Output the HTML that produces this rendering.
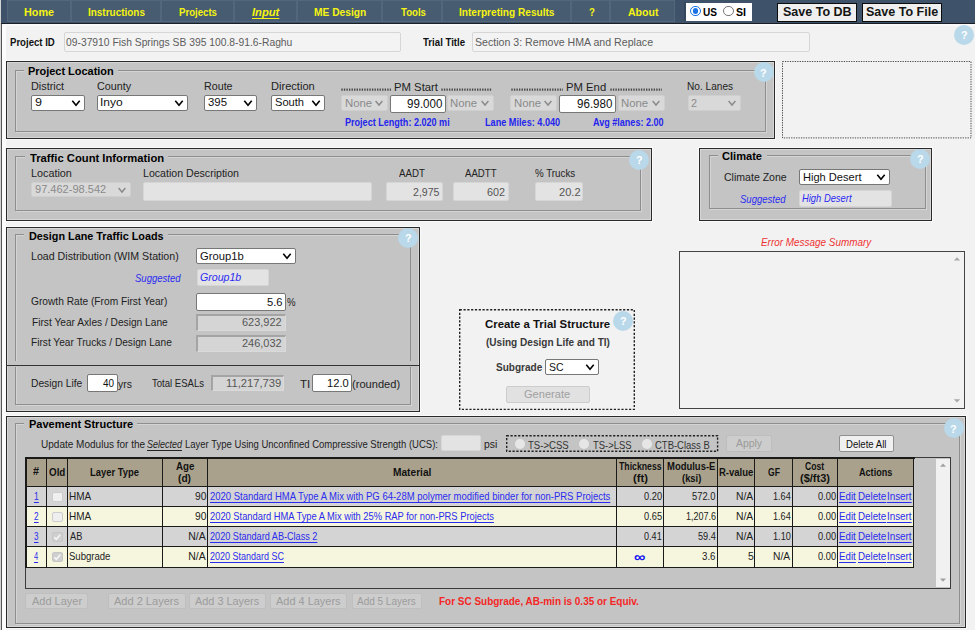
<!DOCTYPE html>
<html><head><meta charset="utf-8"><style>
html,body{margin:0;padding:0;background:#f2f2f2;}
body{width:975px;height:630px;overflow:hidden;position:relative;background:#f2f2f2;font-family:"Liberation Sans",sans-serif;}
body>div,body>span{position:absolute;}
span{white-space:nowrap;transform-origin:0 0;}
</style></head><body>
<div style="left:0px;top:0px;width:975px;height:23px;background:#3e5369;"></div>
<div style="left:0px;top:22.7px;width:975px;height:1.3px;background:#1a1f26;"></div>
<div style="left:7px;top:0px;width:64px;height:22px;background:#485c71;border:1px solid #52667c;box-sizing:border-box;"></div>
<div style="left:71px;top:0px;width:90px;height:22px;background:#485c71;border:1px solid #52667c;box-sizing:border-box;"></div>
<div style="left:161px;top:0px;width:73px;height:22px;background:#485c71;border:1px solid #52667c;box-sizing:border-box;"></div>
<div style="left:234px;top:0px;width:63px;height:22px;background:#485c71;border:1px solid #52667c;box-sizing:border-box;"></div>
<div style="left:297px;top:0px;width:85px;height:22px;background:#485c71;border:1px solid #52667c;box-sizing:border-box;"></div>
<div style="left:382px;top:0px;width:60px;height:22px;background:#485c71;border:1px solid #52667c;box-sizing:border-box;"></div>
<div style="left:442px;top:0px;width:129px;height:22px;background:#485c71;border:1px solid #52667c;box-sizing:border-box;"></div>
<div style="left:571px;top:0px;width:39px;height:22px;background:#485c71;border:1px solid #52667c;box-sizing:border-box;"></div>
<div style="left:610px;top:0px;width:65px;height:22px;background:#485c71;border:1px solid #52667c;box-sizing:border-box;"></div>
<div style="left:684px;top:2px;width:2px;height:19px;background:#34485d;"></div>
<span style="left:24.35px;top:7.19px;font-size:11px;line-height:11px;font-weight:bold;font-style:normal;color:#f5f510;transform:scaleX(0.9837);">Home</span>
<span style="left:88.40px;top:7.19px;font-size:11px;line-height:11px;font-weight:bold;font-style:normal;color:#f5f510;transform:scaleX(0.9042);">Instructions</span>
<span style="left:179.42px;top:7.19px;font-size:11px;line-height:11px;font-weight:bold;font-style:normal;color:#f5f510;transform:scaleX(0.8737);">Projects</span>
<span style="left:314.39px;top:7.19px;font-size:11px;line-height:11px;font-weight:bold;font-style:normal;color:#f5f510;transform:scaleX(0.9291);">ME Design</span>
<span style="left:400.90px;top:7.19px;font-size:11px;line-height:11px;font-weight:bold;font-style:normal;color:#f5f510;transform:scaleX(0.8734);">Tools</span>
<span style="left:459.39px;top:7.19px;font-size:11px;line-height:11px;font-weight:bold;font-style:normal;color:#f5f510;transform:scaleX(0.9188);">Interpreting Results</span>
<span style="left:588.62px;top:7.19px;font-size:11px;line-height:11px;font-weight:bold;font-style:normal;color:#f5f510;transform:scaleX(0.8741);">?</span>
<span style="left:627.79px;top:7.19px;font-size:11px;line-height:11px;font-weight:bold;font-style:normal;color:#f5f510;transform:scaleX(0.9569);">About</span>
<span style="left:252.28px;top:7.19px;font-size:11px;line-height:11px;font-weight:bold;font-style:italic;color:#f5f510;transform:scaleX(1.0163);text-decoration:underline;text-underline-offset:1.5px;">Input</span>
<div style="left:686px;top:3px;width:66px;height:18px;background:#fff;"></div>
<div style="left:690.3px;top:5.8px;width:10.6px;height:10.6px;border:1.6px solid #1a73e8;border-radius:50%;box-sizing:border-box;"></div>
<div style="left:692.7px;top:8.2px;width:5.8px;height:5.8px;background:#1a73e8;border-radius:50%;"></div>
<span style="left:703.40px;top:6.99px;font-size:11px;line-height:11px;font-weight:bold;font-style:normal;color:#000;transform:scaleX(0.9161);">US</span>
<div style="left:723.2px;top:5.8px;width:10.6px;height:10.6px;border:1px solid #777;border-radius:50%;box-sizing:border-box;"></div>
<span style="left:735.68px;top:6.99px;font-size:11px;line-height:11px;font-weight:bold;font-style:normal;color:#000;transform:scaleX(0.9626);">SI</span>
<div style="left:777px;top:3.3px;width:79.5px;height:19.2px;background:#efefef;border:1.7px solid #0c0c0c;box-sizing:border-box;"></div>
<span style="left:782.92px;top:6.44px;font-size:12px;line-height:12px;font-weight:bold;font-style:normal;color:#151515;transform:scaleX(1.0428);">Save To DB</span>
<div style="left:862px;top:3.3px;width:79.5px;height:19.2px;background:#efefef;border:1.7px solid #0c0c0c;box-sizing:border-box;"></div>
<span style="left:866.32px;top:6.44px;font-size:12px;line-height:12px;font-weight:bold;font-style:normal;color:#151515;transform:scaleX(1.0442);">Save To File</span>
<div style="left:0px;top:0px;width:1px;height:630px;background:#d4d4d4;"></div>
<div style="left:2px;top:24px;width:3.5px;height:606px;background:#fcfcfc;"></div>
<div style="left:2px;top:24px;width:973px;height:2px;background:#f9f9f9;"></div>
<div style="left:1px;top:24px;width:1px;height:606px;background:#555;"></div>
<span style="left:9.62px;top:37.11px;font-size:10.5px;line-height:10.5px;font-weight:bold;font-style:normal;color:#111;transform:scaleX(0.9128);">Project ID</span>
<div style="left:64px;top:32px;width:337px;height:20px;background:#f3f3f3;border:1px solid #d6d6d6;border-radius:2px;box-sizing:border-box;"></div>
<span style="left:66.09px;top:36.89px;font-size:11px;line-height:11px;font-weight:normal;font-style:normal;color:#5c5c5c;transform:scaleX(0.9370);">09-37910 Fish Springs SB 395 100.8-91.6-Raghu</span>
<span style="left:422.90px;top:37.11px;font-size:10.5px;line-height:10.5px;font-weight:bold;font-style:normal;color:#111;transform:scaleX(0.9172);">Trial Title</span>
<div style="left:472px;top:32px;width:338px;height:20px;background:#f3f3f3;border:1px solid #d6d6d6;border-radius:2px;box-sizing:border-box;"></div>
<span style="left:475.47px;top:36.89px;font-size:11px;line-height:11px;font-weight:normal;font-style:normal;color:#5c5c5c;transform:scaleX(0.9641);">Section 3: Remove HMA and Replace</span>
<div style="left:954.1px;top:24.700000000000003px;width:20px;height:20px;background:#b9d8e9;border-radius:50%;"></div>
<span style="left:960.87px;top:29.99px;font-size:11px;line-height:11px;font-weight:bold;font-style:normal;color:#fff;transform:scaleX(0.9790);">?</span>
<div style="left:6px;top:61px;width:767px;height:76px;background:#c4c4c4;border:1px solid #2a2a2a;box-shadow:0 0 0 1px #fbfbfb, inset 0 0 0 1px #d6d6d6;"></div>
<div style="left:15px;top:70px;width:750.5px;height:62px;border:1px solid #8e8e8e;box-shadow:inset 1px 1px 0 #d4d4d4, 1px 1px 0 #d4d4d4;box-sizing:border-box;"></div>
<div style="left:23.7px;top:67px;width:94.3px;height:6px;background:#c4c4c4;"></div>
<span style="left:28.04px;top:65.87px;font-size:11.5px;line-height:11.5px;font-weight:bold;font-style:normal;color:#000;transform:scaleX(0.9508);">Project Location</span>
<div style="left:753.6px;top:62.3px;width:20px;height:20px;background:#b9d8e9;border-radius:50%;"></div>
<span style="left:760.37px;top:67.59px;font-size:11px;line-height:11px;font-weight:bold;font-style:normal;color:#fff;transform:scaleX(0.9790);">?</span>
<span style="left:30.93px;top:80.81px;font-size:10.5px;line-height:10.5px;font-weight:normal;font-style:normal;color:#222;transform:scaleX(1.0325);">District</span>
<span style="left:96.86px;top:80.81px;font-size:10.5px;line-height:10.5px;font-weight:normal;font-style:normal;color:#222;transform:scaleX(1.0256);">County</span>
<span style="left:203.94px;top:80.81px;font-size:10.5px;line-height:10.5px;font-weight:normal;font-style:normal;color:#222;transform:scaleX(1.0199);">Route</span>
<span style="left:270.51px;top:80.81px;font-size:10.5px;line-height:10.5px;font-weight:normal;font-style:normal;color:#222;transform:scaleX(1.0551);">Direction</span>
<div style="left:31px;top:95px;width:54px;height:16px;background:#fff;border:1px solid #777;border-radius:2px;box-sizing:border-box;"></div>
<span style="left:35.00px;top:96.71px;font-size:10.5px;line-height:10.5px;font-weight:normal;font-style:normal;color:#111;transform:scaleX(1.1955);">9</span>
<svg style="position:absolute;left:69.8px;top:96.95px" width="12" height="12"><polyline points="2.3,3.8 6,8.2 9.7,3.8" fill="none" stroke="#000" stroke-width="1.6"/></svg>
<div style="left:97px;top:95px;width:91px;height:16px;background:#fff;border:1px solid #777;border-radius:2px;box-sizing:border-box;"></div>
<span style="left:100.32px;top:96.71px;font-size:10.5px;line-height:10.5px;font-weight:normal;font-style:normal;color:#111;transform:scaleX(1.1418);">Inyo</span>
<svg style="position:absolute;left:173.39999999999998px;top:96.95px" width="12" height="12"><polyline points="2.3,3.8 6,8.2 9.7,3.8" fill="none" stroke="#000" stroke-width="1.6"/></svg>
<div style="left:204px;top:95px;width:53px;height:16px;background:#fff;border:1px solid #777;border-radius:2px;box-sizing:border-box;"></div>
<span style="left:208.34px;top:96.71px;font-size:10.5px;line-height:10.5px;font-weight:normal;font-style:normal;color:#111;transform:scaleX(1.0842);">395</span>
<svg style="position:absolute;left:242.39999999999998px;top:96.95px" width="12" height="12"><polyline points="2.3,3.8 6,8.2 9.7,3.8" fill="none" stroke="#000" stroke-width="1.6"/></svg>
<div style="left:271px;top:95px;width:54px;height:16px;background:#fff;border:1px solid #777;border-radius:2px;box-sizing:border-box;"></div>
<span style="left:274.84px;top:96.71px;font-size:10.5px;line-height:10.5px;font-weight:normal;font-style:normal;color:#111;transform:scaleX(1.0590);">South</span>
<svg style="position:absolute;left:310.09999999999997px;top:96.95px" width="12" height="12"><polyline points="2.3,3.8 6,8.2 9.7,3.8" fill="none" stroke="#000" stroke-width="1.6"/></svg>
<svg style="position:absolute;left:341px;top:87px" width="50" height="6"><line x1="0.3" y1="2.7" x2="50" y2="2.7" stroke="#4a4a4a" stroke-width="2.2" stroke-dasharray="1.4,1.15"/></svg>
<svg style="position:absolute;left:441px;top:87px" width="51" height="6"><line x1="0.3" y1="2.7" x2="51" y2="2.7" stroke="#4a4a4a" stroke-width="2.2" stroke-dasharray="1.4,1.15"/></svg>
<svg style="position:absolute;left:510.5px;top:87px" width="52.0" height="6"><line x1="0.3" y1="2.7" x2="52.0" y2="2.7" stroke="#4a4a4a" stroke-width="2.2" stroke-dasharray="1.4,1.15"/></svg>
<svg style="position:absolute;left:609.5px;top:87px" width="52.5" height="6"><line x1="0.3" y1="2.7" x2="52.5" y2="2.7" stroke="#4a4a4a" stroke-width="2.2" stroke-dasharray="1.4,1.15"/></svg>
<span style="left:394.09px;top:81.61px;font-size:10.5px;line-height:10.5px;font-weight:normal;font-style:normal;color:#222;transform:scaleX(1.0777);">PM Start</span>
<span style="left:566.10px;top:81.61px;font-size:10.5px;line-height:10.5px;font-weight:normal;font-style:normal;color:#222;transform:scaleX(1.0753);">PM End</span>
<div style="left:341px;top:95px;width:47px;height:16px;background:#d9d9d9;border:1px solid #cfcfcf;border-radius:2px;box-sizing:border-box;"></div>
<span style="left:344.69px;top:97.51px;font-size:10.5px;line-height:10.5px;font-weight:normal;font-style:normal;color:#8a8a8a;transform:scaleX(1.0830);">None</span>
<svg style="position:absolute;left:372.5px;top:97.1px" width="12" height="12"><polyline points="2.6,3.96 6,8.04 9.4,3.96" fill="none" stroke="#8a8a8a" stroke-width="1.4"/></svg>
<div style="left:390px;top:95px;width:56px;height:18px;background:#fff;border:1px solid #777;border-radius:2px;box-sizing:border-box;"></div>
<span style="left:406.54px;top:97.64px;font-size:12px;line-height:12px;font-weight:normal;font-style:normal;color:#111;transform:scaleX(0.9648);">99.000</span>
<div style="left:447px;top:95px;width:47px;height:16px;background:#d9d9d9;border:1px solid #cfcfcf;border-radius:2px;box-sizing:border-box;"></div>
<span style="left:450.09px;top:97.51px;font-size:10.5px;line-height:10.5px;font-weight:normal;font-style:normal;color:#8a8a8a;transform:scaleX(1.0830);">None</span>
<svg style="position:absolute;left:478.5px;top:97.1px" width="12" height="12"><polyline points="2.6,3.96 6,8.04 9.4,3.96" fill="none" stroke="#8a8a8a" stroke-width="1.4"/></svg>
<div style="left:510px;top:95px;width:47px;height:16px;background:#d9d9d9;border:1px solid #cfcfcf;border-radius:2px;box-sizing:border-box;"></div>
<span style="left:513.89px;top:97.51px;font-size:10.5px;line-height:10.5px;font-weight:normal;font-style:normal;color:#8a8a8a;transform:scaleX(1.0830);">None</span>
<svg style="position:absolute;left:541.5px;top:97.1px" width="12" height="12"><polyline points="2.6,3.96 6,8.04 9.4,3.96" fill="none" stroke="#8a8a8a" stroke-width="1.4"/></svg>
<div style="left:559px;top:95px;width:57px;height:18px;background:#fff;border:1px solid #777;border-radius:2px;box-sizing:border-box;"></div>
<span style="left:576.54px;top:97.64px;font-size:12px;line-height:12px;font-weight:normal;font-style:normal;color:#111;transform:scaleX(0.9648);">96.980</span>
<div style="left:618px;top:95px;width:47px;height:16px;background:#d9d9d9;border:1px solid #cfcfcf;border-radius:2px;box-sizing:border-box;"></div>
<span style="left:621.09px;top:97.51px;font-size:10.5px;line-height:10.5px;font-weight:normal;font-style:normal;color:#8a8a8a;transform:scaleX(1.0830);">None</span>
<svg style="position:absolute;left:649.5px;top:97.1px" width="12" height="12"><polyline points="2.6,3.96 6,8.04 9.4,3.96" fill="none" stroke="#8a8a8a" stroke-width="1.4"/></svg>
<span style="left:687.19px;top:80.81px;font-size:10.5px;line-height:10.5px;font-weight:normal;font-style:normal;color:#222;transform:scaleX(0.9631);">No. Lanes</span>
<div style="left:688px;top:95px;width:53px;height:16px;background:#d9d9d9;border:1px solid #cfcfcf;border-radius:2px;box-sizing:border-box;"></div>
<span style="left:691.46px;top:97.51px;font-size:10.5px;line-height:10.5px;font-weight:normal;font-style:normal;color:#8a8a8a;transform:scaleX(1.0352);">2</span>
<svg style="position:absolute;left:726.3px;top:97.14999999999999px" width="12" height="12"><polyline points="2.6,3.96 6,8.04 9.4,3.96" fill="none" stroke="#8a8a8a" stroke-width="1.4"/></svg>
<span style="left:344.96px;top:116.71px;font-size:10.5px;line-height:10.5px;font-weight:bold;font-style:normal;color:#2424ee;transform:scaleX(0.8624);">Project Length: 2.020 mi</span>
<span style="left:485.15px;top:116.71px;font-size:10.5px;line-height:10.5px;font-weight:bold;font-style:normal;color:#2424ee;transform:scaleX(0.8704);">Lane Miles: 4.040</span>
<span style="left:592.82px;top:116.71px;font-size:10.5px;line-height:10.5px;font-weight:bold;font-style:normal;color:#2424ee;transform:scaleX(0.8613);">Avg #lanes: 2.00</span>
<svg style="position:absolute;left:782px;top:60.8px;overflow:visible" width="189.5" height="77.4"><rect x="0.5" y="0.5" width="188.50" height="76.40" fill="none" stroke="#4a4a4a" stroke-width="1" stroke-dasharray="1.3,1.15"/></svg>
<div style="left:6px;top:147.7px;width:644px;height:71.30000000000001px;background:#c4c4c4;border:1px solid #2a2a2a;box-shadow:0 0 0 1px #fbfbfb, inset 0 0 0 1px #d6d6d6;"></div>
<div style="left:15px;top:156px;width:626px;height:55px;border:1px solid #8e8e8e;box-shadow:inset 1px 1px 0 #d4d4d4, 1px 1px 0 #d4d4d4;box-sizing:border-box;"></div>
<div style="left:24.7px;top:153px;width:143.3px;height:6px;background:#c4c4c4;"></div>
<span style="left:29.59px;top:153.17px;font-size:11.5px;line-height:11.5px;font-weight:bold;font-style:normal;color:#000;transform:scaleX(0.9765);">Traffic Count Information</span>
<div style="left:629.4px;top:149.8px;width:20px;height:20px;background:#b9d8e9;border-radius:50%;"></div>
<span style="left:636.17px;top:155.09px;font-size:11px;line-height:11px;font-weight:bold;font-style:normal;color:#fff;transform:scaleX(0.9790);">?</span>
<span style="left:30.94px;top:168.11px;font-size:10.5px;line-height:10.5px;font-weight:normal;font-style:normal;color:#222;transform:scaleX(1.0285);">Location</span>
<span style="left:142.75px;top:168.11px;font-size:10.5px;line-height:10.5px;font-weight:normal;font-style:normal;color:#222;transform:scaleX(1.0090);">Location Description</span>
<span style="left:399.20px;top:168.11px;font-size:10.5px;line-height:10.5px;font-weight:normal;font-style:normal;color:#222;transform:scaleX(0.9236);">AADT</span>
<span style="left:464.90px;top:168.11px;font-size:10.5px;line-height:10.5px;font-weight:normal;font-style:normal;color:#222;transform:scaleX(0.9173);">AADTT</span>
<span style="left:535.11px;top:168.11px;font-size:10.5px;line-height:10.5px;font-weight:normal;font-style:normal;color:#222;transform:scaleX(0.9312);">% Trucks</span>
<div style="left:31px;top:182px;width:100px;height:15px;background:#d9d9d9;border:1px solid #cfcfcf;border-radius:2px;box-sizing:border-box;"></div>
<span style="left:35.36px;top:184.11px;font-size:10.5px;line-height:10.5px;font-weight:normal;font-style:normal;color:#8a8a8a;transform:scaleX(1.0512);">97.462-98.542</span>
<svg style="position:absolute;left:115.5px;top:183.65px" width="12" height="12"><polyline points="2.6,3.96 6,8.04 9.4,3.96" fill="none" stroke="#8a8a8a" stroke-width="1.4"/></svg>
<div style="left:143px;top:182px;width:229px;height:19px;background:#e3e3e3;border:1px solid #d6d6d6;border-radius:2px;box-sizing:border-box;"></div>
<div style="left:386px;top:182px;width:57px;height:19px;background:#e3e3e3;border:1px solid #d6d6d6;border-radius:2px;box-sizing:border-box;"></div>
<span style="left:413.07px;top:186.91px;font-size:10.5px;line-height:10.5px;font-weight:normal;font-style:normal;color:#555;transform:scaleX(1.0075);">2,975</span>
<div style="left:453px;top:182px;width:56px;height:19px;background:#e3e3e3;border:1px solid #d6d6d6;border-radius:2px;box-sizing:border-box;"></div>
<span style="left:487.46px;top:186.91px;font-size:10.5px;line-height:10.5px;font-weight:normal;font-style:normal;color:#555;transform:scaleX(1.0252);">602</span>
<div style="left:535px;top:182px;width:48px;height:19px;background:#e3e3e3;border:1px solid #d6d6d6;border-radius:2px;box-sizing:border-box;"></div>
<span style="left:558.65px;top:186.91px;font-size:10.5px;line-height:10.5px;font-weight:normal;font-style:normal;color:#555;transform:scaleX(1.0553);">20.2</span>
<div style="left:699px;top:148.2px;width:231px;height:71.30000000000001px;background:#c4c4c4;border:1px solid #2a2a2a;box-shadow:0 0 0 1px #fbfbfb, inset 0 0 0 1px #d6d6d6;"></div>
<div style="left:708.5px;top:154.9px;width:217.5px;height:53.79999999999998px;border:1px solid #8e8e8e;box-shadow:inset 1px 1px 0 #d4d4d4, 1px 1px 0 #d4d4d4;box-sizing:border-box;"></div>
<div style="left:717.6px;top:152px;width:49.19999999999993px;height:6px;background:#c4c4c4;"></div>
<span style="left:722.16px;top:151.17px;font-size:11.5px;line-height:11.5px;font-weight:bold;font-style:normal;color:#000;transform:scaleX(0.9629);">Climate</span>
<div style="left:910.3px;top:149.2px;width:20px;height:20px;background:#b9d8e9;border-radius:50%;"></div>
<span style="left:917.07px;top:154.49px;font-size:11px;line-height:11px;font-weight:bold;font-style:normal;color:#fff;transform:scaleX(0.9790);">?</span>
<span style="left:724.47px;top:172.11px;font-size:10.5px;line-height:10.5px;font-weight:normal;font-style:normal;color:#222;transform:scaleX(1.0045);">Climate Zone</span>
<div style="left:799px;top:169px;width:91px;height:16px;background:#fff;border:1px solid #777;border-radius:2px;box-sizing:border-box;"></div>
<span style="left:802.61px;top:171.91px;font-size:10.5px;line-height:10.5px;font-weight:normal;font-style:normal;color:#111;transform:scaleX(1.0551);">High Desert</span>
<svg style="position:absolute;left:875.2px;top:171.2px" width="12" height="12"><polyline points="2.3,3.8 6,8.2 9.7,3.8" fill="none" stroke="#000" stroke-width="1.6"/></svg>
<span style="left:739.71px;top:193.61px;font-size:10.5px;line-height:10.5px;font-weight:normal;font-style:italic;color:#2b2bf2;transform:scaleX(0.9085);">Suggested</span>
<div style="left:799px;top:190px;width:93px;height:17px;background:#e3e3e3;border:1px solid #d6d6d6;border-radius:2px;box-sizing:border-box;"></div>
<span style="left:802.22px;top:192.61px;font-size:10.5px;line-height:10.5px;font-weight:normal;font-style:italic;color:#2b2bf2;transform:scaleX(0.8929);">High Desert</span>
<div style="left:6px;top:226.5px;width:412px;height:183.0px;background:#c4c4c4;border:1px solid #2a2a2a;box-shadow:0 0 0 1px #fbfbfb, inset 0 0 0 1px #d6d6d6;"></div>
<div style="left:15px;top:234.3px;width:396px;height:127px;border:1px solid #8e8e8e;border-bottom:none;box-shadow:inset 1px 1px 0 #d4d4d4;box-sizing:border-box;"></div>
<div style="left:6px;top:364.5px;width:413px;height:1.3px;background:#333;"></div>
<div style="left:15px;top:367px;width:396px;height:37.5px;border:1px solid #8e8e8e;border-top:none;box-shadow:inset 1px 0 0 #d4d4d4, 1px 1px 0 #d4d4d4;box-sizing:border-box;"></div>
<div style="left:24.3px;top:231.5px;width:143.5px;height:6px;background:#c4c4c4;"></div>
<span style="left:28.65px;top:230.67px;font-size:11.5px;line-height:11.5px;font-weight:bold;font-style:normal;color:#000;transform:scaleX(0.9400);">Design Lane Traffic Loads</span>
<div style="left:398.3px;top:228px;width:20px;height:20px;background:#b9d8e9;border-radius:50%;"></div>
<span style="left:405.07px;top:233.29px;font-size:11px;line-height:11px;font-weight:bold;font-style:normal;color:#fff;transform:scaleX(0.9790);">?</span>
<span style="left:30.95px;top:250.61px;font-size:10.5px;line-height:10.5px;font-weight:normal;font-style:normal;color:#222;transform:scaleX(1.0126);">Load Distribution (WIM Station)</span>
<div style="left:196px;top:248px;width:100px;height:16px;background:#fff;border:1px solid #777;border-radius:2px;box-sizing:border-box;"></div>
<span style="left:199.94px;top:250.61px;font-size:10.5px;line-height:10.5px;font-weight:normal;font-style:normal;color:#111;transform:scaleX(1.0674);">Group1b</span>
<svg style="position:absolute;left:280.7px;top:249.8px" width="12" height="12"><polyline points="2.3,3.8 6,8.2 9.7,3.8" fill="none" stroke="#000" stroke-width="1.6"/></svg>
<span style="left:134.71px;top:272.61px;font-size:10.5px;line-height:10.5px;font-weight:normal;font-style:italic;color:#2b2bf2;transform:scaleX(0.9085);">Suggested</span>
<div style="left:197px;top:269px;width:72px;height:17px;background:#e3e3e3;border:1px solid #d6d6d6;border-radius:2px;box-sizing:border-box;"></div>
<span style="left:199.97px;top:272.11px;font-size:10.5px;line-height:10.5px;font-weight:normal;font-style:italic;color:#2b2bf2;transform:scaleX(1.0097);">Group1b</span>
<span style="left:31.29px;top:296.11px;font-size:10.5px;line-height:10.5px;font-weight:normal;font-style:normal;color:#222;transform:scaleX(0.9696);">Growth Rate (From First Year)</span>
<div style="left:196px;top:293px;width:90px;height:18px;background:#fff;border:1px solid #777;border-radius:2px;box-sizing:border-box;"></div>
<span style="left:267.05px;top:297.11px;font-size:10.5px;line-height:10.5px;font-weight:normal;font-style:normal;color:#111;transform:scaleX(1.0623);">5.6</span>
<span style="left:286.71px;top:297.11px;font-size:10.5px;line-height:10.5px;font-weight:normal;font-style:normal;color:#222;transform:scaleX(0.9180);">%</span>
<span style="left:31.79px;top:316.61px;font-size:10.5px;line-height:10.5px;font-weight:normal;font-style:normal;color:#222;transform:scaleX(0.9690);">First Year Axles / Design Lane</span>
<div style="left:196px;top:314px;width:90px;height:17px;background:#d5d5d5;border-style:solid;border-width:2px 1px 1px 2px;border-color:#a4a4a4 #dadada #dadada #a4a4a4;box-sizing:border-box;"></div>
<span style="left:242.25px;top:317.11px;font-size:10.5px;line-height:10.5px;font-weight:normal;font-style:normal;color:#555;transform:scaleX(1.0444);">623,922</span>
<span style="left:31.19px;top:337.11px;font-size:10.5px;line-height:10.5px;font-weight:normal;font-style:normal;color:#222;transform:scaleX(0.9648);">First Year Trucks / Design Lane</span>
<div style="left:196px;top:335px;width:90px;height:17px;background:#d5d5d5;border-style:solid;border-width:2px 1px 1px 2px;border-color:#a4a4a4 #dadada #dadada #a4a4a4;box-sizing:border-box;"></div>
<span style="left:242.25px;top:337.61px;font-size:10.5px;line-height:10.5px;font-weight:normal;font-style:normal;color:#555;transform:scaleX(1.0444);">246,032</span>
<span style="left:31.18px;top:378.11px;font-size:10.5px;line-height:10.5px;font-weight:normal;font-style:normal;color:#222;transform:scaleX(0.9758);">Design Life</span>
<div style="left:87px;top:374px;width:31px;height:18px;background:#fff;border:1px solid #777;border-radius:2px;box-sizing:border-box;"></div>
<span style="left:103.30px;top:378.19px;font-size:11px;line-height:11px;font-weight:normal;font-style:normal;color:#111;transform:scaleX(0.9005);">40</span>
<span style="left:118.40px;top:378.61px;font-size:10.5px;line-height:10.5px;font-weight:normal;font-style:normal;color:#222;transform:scaleX(0.9963);">yrs</span>
<span style="left:151.51px;top:378.11px;font-size:10.5px;line-height:10.5px;font-weight:normal;font-style:normal;color:#222;transform:scaleX(0.9101);">Total ESALs</span>
<div style="left:211px;top:375px;width:73px;height:16px;background:#d5d5d5;border-style:solid;border-width:2px 1px 1px 2px;border-color:#a4a4a4 #dadada #dadada #a4a4a4;box-sizing:border-box;"></div>
<span style="left:226.21px;top:377.61px;font-size:10.5px;line-height:10.5px;font-weight:normal;font-style:normal;color:#555;transform:scaleX(1.0692);">11,217,739</span>
<span style="left:299.77px;top:378.61px;font-size:10.5px;line-height:10.5px;font-weight:normal;font-style:normal;color:#222;transform:scaleX(1.0989);">TI</span>
<div style="left:312px;top:374px;width:40px;height:18px;background:#fff;border:1px solid #777;border-radius:2px;box-sizing:border-box;"></div>
<span style="left:326.72px;top:378.19px;font-size:11px;line-height:11px;font-weight:normal;font-style:normal;color:#111;transform:scaleX(1.0128);">12.0</span>
<span style="left:352.33px;top:379.11px;font-size:10.5px;line-height:10.5px;font-weight:normal;font-style:normal;color:#222;transform:scaleX(1.0564);">(rounded)</span>
<svg style="position:absolute;left:459.2px;top:308.6px;overflow:visible" width="176.0" height="101.1"><rect x="0.7" y="0.7" width="174.60" height="99.70" fill="none" stroke="#222" stroke-width="1.4" stroke-dasharray="2.2,1.6"/></svg>
<div style="left:613.3px;top:310.5px;width:20px;height:20px;background:#b9d8e9;border-radius:50%;"></div>
<span style="left:620.07px;top:315.79px;font-size:11px;line-height:11px;font-weight:bold;font-style:normal;color:#fff;transform:scaleX(0.9790);">?</span>
<span style="left:484.85px;top:318.69px;font-size:11px;line-height:11px;font-weight:bold;font-style:normal;color:#111;transform:scaleX(1.0339);">Create a Trial Structure</span>
<span style="left:485.50px;top:336.61px;font-size:10.5px;line-height:10.5px;font-weight:bold;font-style:normal;color:#3a3a3a;transform:scaleX(0.9570);">(Using Design Life and TI)</span>
<span style="left:495.70px;top:361.61px;font-size:10.5px;line-height:10.5px;font-weight:bold;font-style:normal;color:#3a3a3a;transform:scaleX(0.9566);">Subgrade</span>
<div style="left:545px;top:359px;width:54px;height:16px;background:#fff;border:1px solid #777;border-radius:2px;box-sizing:border-box;"></div>
<span style="left:548.88px;top:361.61px;font-size:10.5px;line-height:10.5px;font-weight:normal;font-style:normal;color:#111;transform:scaleX(0.9963);">SC</span>
<svg style="position:absolute;left:583.7px;top:361.0px" width="12" height="12"><polyline points="2.3,3.8 6,8.2 9.7,3.8" fill="none" stroke="#000" stroke-width="1.6"/></svg>
<div style="left:506px;top:385.5px;width:83.5px;height:17.5px;background:#e1e1e1;border:1px solid #cdcdcd;border-radius:2px;box-sizing:border-box;"></div>
<span style="left:524.45px;top:389.11px;font-size:10.5px;line-height:10.5px;font-weight:normal;font-style:normal;color:#a0a0a0;transform:scaleX(1.0530);">Generate</span>
<span style="left:761.00px;top:236.61px;font-size:10.5px;line-height:10.5px;font-weight:normal;font-style:italic;color:#ee3333;transform:scaleX(0.9447);">Error Message Summary</span>
<div style="left:678.8px;top:251px;width:286.2px;height:158px;border:1.3px solid #444;box-sizing:border-box;"></div>
<svg style="position:absolute;left:952px;top:255px" width="10" height="8"><polygon points="1.8,5.6 8.2,5.6 5,2.2" fill="#a8a8a8"/></svg>
<svg style="position:absolute;left:952px;top:397px" width="10" height="8"><polygon points="1.8,2.2 8.2,2.2 5,5.6" fill="#a8a8a8"/></svg>
<div style="left:6px;top:416.2px;width:957.5px;height:210.3px;background:#c4c4c4;border:1px solid #2a2a2a;box-shadow:0 0 0 1px #fbfbfb, inset 0 0 0 1px #d6d6d6;"></div>
<div style="left:15px;top:423.3px;width:945px;height:200.49999999999994px;border:1px solid #8e8e8e;box-shadow:inset 1px 1px 0 #d4d4d4, 1px 1px 0 #d4d4d4;box-sizing:border-box;"></div>
<div style="left:24.3px;top:420.3px;width:113.00000000000001px;height:6px;background:#c4c4c4;"></div>
<span style="left:28.64px;top:419.37px;font-size:11.5px;line-height:11.5px;font-weight:bold;font-style:normal;color:#000;transform:scaleX(0.9579);">Pavement Structure</span>
<div style="left:943.6px;top:418.4px;width:20px;height:20px;background:#b9d8e9;border-radius:50%;"></div>
<span style="left:950.37px;top:423.69px;font-size:11px;line-height:11px;font-weight:bold;font-style:normal;color:#fff;transform:scaleX(0.9790);">?</span>
<span style="left:40.90px;top:439.01px;font-size:10.5px;line-height:10.5px;font-weight:normal;font-style:normal;color:#222;transform:scaleX(0.9542);">Update Modulus for the</span>
<span style="left:147.43px;top:439.01px;font-size:10.5px;line-height:10.5px;font-weight:normal;font-style:italic;color:#222;transform:scaleX(0.8544);text-decoration:underline;text-underline-offset:1.5px;">Selected</span>
<span style="left:184.84px;top:439.01px;font-size:10.5px;line-height:10.5px;font-weight:normal;font-style:normal;color:#222;transform:scaleX(0.9056);">Layer Type Using Unconfined Compressive Strength (UCS):</span>
<div style="left:441px;top:435px;width:40px;height:16px;background:#e3e3e3;border:1px solid #d6d6d6;border-radius:2px;box-sizing:border-box;"></div>
<span style="left:484.38px;top:438.61px;font-size:10.5px;line-height:10.5px;font-weight:normal;font-style:normal;color:#222;transform:scaleX(0.9852);">psi</span>
<svg style="position:absolute;left:506.3px;top:435.2px;overflow:visible" width="212.3" height="17.0"><rect x="0.7" y="0.7" width="210.90" height="15.60" fill="none" stroke="#222" stroke-width="1.4" stroke-dasharray="2.2,1.6"/></svg>
<div style="left:514.6px;top:439px;width:10px;height:10px;background:#e6e6e6;border-radius:50%;"></div>
<span style="left:527.81px;top:439.61px;font-size:10.5px;line-height:10.5px;font-weight:normal;font-style:normal;color:#333;transform:scaleX(0.9114);">TS-&gt;CSS</span>
<div style="left:579px;top:439px;width:10px;height:10px;background:#e6e6e6;border-radius:50%;"></div>
<span style="left:592.81px;top:439.61px;font-size:10.5px;line-height:10.5px;font-weight:normal;font-style:normal;color:#333;transform:scaleX(0.9003);">TS-&gt;LSS</span>
<div style="left:642.4px;top:439px;width:10px;height:10px;background:#e6e6e6;border-radius:50%;"></div>
<span style="left:655.13px;top:439.61px;font-size:10.5px;line-height:10.5px;font-weight:normal;font-style:normal;color:#333;transform:scaleX(0.9021);">CTB-Class B</span>
<div style="left:726px;top:435px;width:46px;height:17px;background:#cdcdcd;border:1px solid #bdbdbd;border-radius:2px;box-sizing:border-box;"></div>
<span style="left:736.00px;top:438.11px;font-size:10.5px;line-height:10.5px;font-weight:normal;font-style:normal;color:#9a9a9a;transform:scaleX(0.9905);">Apply</span>
<div style="left:839px;top:435px;width:54.5px;height:17px;background:#f0f0f0;border:1px solid #8f8f8f;border-radius:2px;box-sizing:border-box;"></div>
<span style="left:846.24px;top:438.61px;font-size:10.5px;line-height:10.5px;font-weight:normal;font-style:normal;color:#111;transform:scaleX(0.9104);">Delete All</span>
<div style="left:25px;top:457px;width:925.5px;height:131.5px;background:#c4c4c4;border:1.5px solid #3a3a3a;border-right-width:1px;box-sizing:border-box;"></div>
<div style="left:936px;top:458.5px;width:13.7px;height:128.5px;background:#f1f1f1;"></div>
<svg style="position:absolute;left:938.4px;top:461px" width="10" height="8"><polygon points="2,5.8 8,5.8 5,2.4" fill="#a0a0a0"/></svg>
<svg style="position:absolute;left:938.4px;top:576px" width="10" height="8"><polygon points="2,2.4 8,2.4 5,5.8" fill="#a0a0a0"/></svg>
<div style="left:26px;top:458px;width:887.6px;height:28.4px;background:#a9a18c;"></div>
<div style="left:26px;top:486.4px;width:887.6px;height:19.900000000000034px;background:#d4d4d4;"></div>
<div style="left:26px;top:506.3px;width:887.6px;height:19.999999999999943px;background:#f6f6de;"></div>
<div style="left:26px;top:526.3px;width:887.6px;height:20.100000000000023px;background:#d4d4d4;"></div>
<div style="left:26px;top:546.4px;width:887.6px;height:20.800000000000068px;background:#f6f6de;"></div>
<div style="left:26px;top:485.79999999999995px;width:887.6px;height:1.3px;background:#1a1a1a;"></div>
<div style="left:26px;top:505.7px;width:887.6px;height:1.3px;background:#1a1a1a;"></div>
<div style="left:26px;top:525.6999999999999px;width:887.6px;height:1.3px;background:#1a1a1a;"></div>
<div style="left:26px;top:545.8px;width:887.6px;height:1.3px;background:#1a1a1a;"></div>
<div style="left:26px;top:566.6px;width:887.6px;height:1.3px;background:#1a1a1a;"></div>
<div style="left:45.8px;top:458px;width:1.3px;height:109.8px;background:#1a1a1a;"></div>
<div style="left:66.7px;top:458px;width:1.3px;height:109.8px;background:#1a1a1a;"></div>
<div style="left:161.9px;top:458px;width:1.3px;height:109.8px;background:#1a1a1a;"></div>
<div style="left:206.9px;top:458px;width:1.3px;height:109.8px;background:#1a1a1a;"></div>
<div style="left:615.9px;top:458px;width:1.3px;height:109.8px;background:#1a1a1a;"></div>
<div style="left:663.1px;top:458px;width:1.3px;height:109.8px;background:#1a1a1a;"></div>
<div style="left:716.8px;top:458px;width:1.3px;height:109.8px;background:#1a1a1a;"></div>
<div style="left:754.0px;top:458px;width:1.3px;height:109.8px;background:#1a1a1a;"></div>
<div style="left:791.6999999999999px;top:458px;width:1.3px;height:109.8px;background:#1a1a1a;"></div>
<div style="left:837.0px;top:458px;width:1.3px;height:109.8px;background:#1a1a1a;"></div>
<div style="left:913.0px;top:458px;width:1.3px;height:109.8px;background:#1a1a1a;"></div>
<div style="left:25px;top:457px;width:890px;height:1.6px;background:#1a1a1a;"></div>
<div style="left:25px;top:457px;width:1.6px;height:111px;background:#1a1a1a;"></div>
<span style="left:33.49px;top:466.11px;font-size:10.5px;line-height:10.5px;font-weight:bold;font-style:normal;color:#111;transform:scaleX(1.0243);">#</span>
<span style="left:48.91px;top:466.61px;font-size:10.5px;line-height:10.5px;font-weight:bold;font-style:normal;color:#111;transform:scaleX(0.9342);">Old</span>
<span style="left:90.44px;top:466.61px;font-size:10.5px;line-height:10.5px;font-weight:bold;font-style:normal;color:#111;transform:scaleX(0.8946);">Layer Type</span>
<span style="left:175.81px;top:461.31px;font-size:10.5px;line-height:10.5px;font-weight:bold;font-style:normal;color:#111;transform:scaleX(0.9264);">Age</span>
<span style="left:178.49px;top:472.81px;font-size:10.5px;line-height:10.5px;font-weight:bold;font-style:normal;color:#111;transform:scaleX(0.9685);">(d)</span>
<span style="left:393.09px;top:467.11px;font-size:10.5px;line-height:10.5px;font-weight:bold;font-style:normal;color:#111;transform:scaleX(0.9680);">Material</span>
<span style="left:619.11px;top:461.01px;font-size:10.5px;line-height:10.5px;font-weight:bold;font-style:normal;color:#111;transform:scaleX(0.8304);">Thickness</span>
<span style="left:632.84px;top:472.71px;font-size:10.5px;line-height:10.5px;font-weight:bold;font-style:normal;color:#111;transform:scaleX(1.0753);">(ft)</span>
<span style="left:666.73px;top:461.01px;font-size:10.5px;line-height:10.5px;font-weight:bold;font-style:normal;color:#111;transform:scaleX(0.9011);">Modulus-E</span>
<span style="left:681.53px;top:472.71px;font-size:10.5px;line-height:10.5px;font-weight:bold;font-style:normal;color:#111;transform:scaleX(0.8941);">(ksi)</span>
<span style="left:719.03px;top:466.61px;font-size:10.5px;line-height:10.5px;font-weight:bold;font-style:normal;color:#111;transform:scaleX(0.9037);">R-value</span>
<span style="left:767.86px;top:466.61px;font-size:10.5px;line-height:10.5px;font-weight:bold;font-style:normal;color:#111;transform:scaleX(0.8153);">GF</span>
<span style="left:805.25px;top:461.11px;font-size:10.5px;line-height:10.5px;font-weight:bold;font-style:normal;color:#111;transform:scaleX(0.8251);">Cost</span>
<span style="left:800.05px;top:473.11px;font-size:10.5px;line-height:10.5px;font-weight:bold;font-style:normal;color:#111;transform:scaleX(1.0502);">($/ft3)</span>
<span style="left:859.42px;top:466.71px;font-size:10.5px;line-height:10.5px;font-weight:bold;font-style:normal;color:#111;transform:scaleX(0.8653);">Actions</span>
<span style="left:33.90px;top:491.31px;font-size:10.5px;line-height:10.5px;font-weight:normal;font-style:normal;color:#2b2bee;transform:scaleX(0.8225);text-decoration:underline;text-underline-offset:1.5px;">1</span>
<div style="left:52.3px;top:491.59999999999997px;width:10.4px;height:10.2px;background:#efefef;border:1px solid #cdcdcd;border-radius:2px;box-sizing:border-box;"></div>
<span style="left:68.70px;top:491.31px;font-size:10.5px;line-height:10.5px;font-weight:normal;font-style:normal;color:#222;transform:scaleX(0.9524);">HMA</span>
<span style="left:194.59px;top:491.31px;font-size:10.5px;line-height:10.5px;font-weight:normal;font-style:normal;color:#222;transform:scaleX(0.9799);">90</span>
<span style="left:209.73px;top:491.31px;font-size:10.5px;line-height:10.5px;font-weight:normal;font-style:normal;color:#2b2bee;transform:scaleX(0.9042);text-decoration:underline;text-underline-offset:1.5px;">2020 Standard HMA Type A Mix with PG 64-28M polymer modified binder for non-PRS Projects</span>
<span style="left:643.63px;top:491.31px;font-size:10.5px;line-height:10.5px;font-weight:normal;font-style:normal;color:#222;transform:scaleX(0.8862);">0.20</span>
<span style="left:692.13px;top:491.31px;font-size:10.5px;line-height:10.5px;font-weight:normal;font-style:normal;color:#222;transform:scaleX(0.8897);">572.0</span>
<span style="left:735.77px;top:491.31px;font-size:10.5px;line-height:10.5px;font-weight:normal;font-style:normal;color:#222;transform:scaleX(0.9823);">N/A</span>
<span style="left:772.76px;top:491.31px;font-size:10.5px;line-height:10.5px;font-weight:normal;font-style:normal;color:#222;transform:scaleX(0.8700);">1.64</span>
<span style="left:817.63px;top:491.31px;font-size:10.5px;line-height:10.5px;font-weight:normal;font-style:normal;color:#222;transform:scaleX(0.8862);">0.00</span>
<span style="left:838.82px;top:491.31px;font-size:10.5px;line-height:10.5px;font-weight:normal;font-style:normal;color:#2b2bee;transform:scaleX(0.9292);text-decoration:underline;text-underline-offset:1.5px;">Edit</span>
<span style="left:857.62px;top:491.31px;font-size:10.5px;line-height:10.5px;font-weight:normal;font-style:normal;color:#2b2bee;transform:scaleX(0.9317);text-decoration:underline;text-underline-offset:1.5px;">Delete</span>
<span style="left:887.12px;top:491.31px;font-size:10.5px;line-height:10.5px;font-weight:normal;font-style:normal;color:#2b2bee;transform:scaleX(0.9365);text-decoration:underline;text-underline-offset:1.5px;">Insert</span>
<span style="left:34.09px;top:511.31px;font-size:10.5px;line-height:10.5px;font-weight:normal;font-style:normal;color:#2b2bee;transform:scaleX(0.7867);text-decoration:underline;text-underline-offset:1.5px;">2</span>
<div style="left:52.3px;top:511.5px;width:10.4px;height:10.2px;background:#efefef;border:1px solid #cdcdcd;border-radius:2px;box-sizing:border-box;"></div>
<span style="left:68.70px;top:511.31px;font-size:10.5px;line-height:10.5px;font-weight:normal;font-style:normal;color:#222;transform:scaleX(0.9524);">HMA</span>
<span style="left:194.59px;top:511.31px;font-size:10.5px;line-height:10.5px;font-weight:normal;font-style:normal;color:#222;transform:scaleX(0.9799);">90</span>
<span style="left:209.73px;top:511.31px;font-size:10.5px;line-height:10.5px;font-weight:normal;font-style:normal;color:#2b2bee;transform:scaleX(0.8887);text-decoration:underline;text-underline-offset:1.5px;">2020 Standard HMA Type A Mix with 25% RAP for non-PRS Projects</span>
<span style="left:643.63px;top:511.31px;font-size:10.5px;line-height:10.5px;font-weight:normal;font-style:normal;color:#222;transform:scaleX(0.8862);">0.65</span>
<span style="left:685.57px;top:511.31px;font-size:10.5px;line-height:10.5px;font-weight:normal;font-style:normal;color:#222;transform:scaleX(0.8577);">1,207.6</span>
<span style="left:735.77px;top:511.31px;font-size:10.5px;line-height:10.5px;font-weight:normal;font-style:normal;color:#222;transform:scaleX(0.9823);">N/A</span>
<span style="left:772.76px;top:511.31px;font-size:10.5px;line-height:10.5px;font-weight:normal;font-style:normal;color:#222;transform:scaleX(0.8700);">1.64</span>
<span style="left:817.63px;top:511.31px;font-size:10.5px;line-height:10.5px;font-weight:normal;font-style:normal;color:#222;transform:scaleX(0.8862);">0.00</span>
<span style="left:838.82px;top:511.31px;font-size:10.5px;line-height:10.5px;font-weight:normal;font-style:normal;color:#2b2bee;transform:scaleX(0.9292);text-decoration:underline;text-underline-offset:1.5px;">Edit</span>
<span style="left:857.62px;top:511.31px;font-size:10.5px;line-height:10.5px;font-weight:normal;font-style:normal;color:#2b2bee;transform:scaleX(0.9317);text-decoration:underline;text-underline-offset:1.5px;">Delete</span>
<span style="left:887.12px;top:511.31px;font-size:10.5px;line-height:10.5px;font-weight:normal;font-style:normal;color:#2b2bee;transform:scaleX(0.9365);text-decoration:underline;text-underline-offset:1.5px;">Insert</span>
<span style="left:34.18px;top:531.31px;font-size:10.5px;line-height:10.5px;font-weight:normal;font-style:normal;color:#2b2bee;transform:scaleX(0.7700);text-decoration:underline;text-underline-offset:1.5px;">3</span>
<div style="left:52.3px;top:531.5px;width:10.4px;height:10.2px;background:#cfcfcf;border:1px solid #c6c6c6;border-radius:2px;box-sizing:border-box;"></div>
<svg style="position:absolute;left:52.3px;top:531.5px" width="10.4" height="10.2"><polyline points="2.3,5.2 4.3,7.3 8.2,2.8" fill="none" stroke="#f6f6f6" stroke-width="1.6"/></svg>
<span style="left:69.50px;top:531.31px;font-size:10.5px;line-height:10.5px;font-weight:normal;font-style:normal;color:#222;transform:scaleX(0.8786);">AB</span>
<span style="left:188.16px;top:531.31px;font-size:10.5px;line-height:10.5px;font-weight:normal;font-style:normal;color:#222;">N/A</span>
<span style="left:209.74px;top:531.31px;font-size:10.5px;line-height:10.5px;font-weight:normal;font-style:normal;color:#2b2bee;transform:scaleX(0.8677);text-decoration:underline;text-underline-offset:1.5px;">2020 Standard AB-Class 2</span>
<span style="left:644.14px;top:531.31px;font-size:10.5px;line-height:10.5px;font-weight:normal;font-style:normal;color:#222;transform:scaleX(0.8653);">0.41</span>
<span style="left:697.63px;top:531.31px;font-size:10.5px;line-height:10.5px;font-weight:normal;font-style:normal;color:#222;transform:scaleX(0.8713);">59.4</span>
<span style="left:735.77px;top:531.31px;font-size:10.5px;line-height:10.5px;font-weight:normal;font-style:normal;color:#222;transform:scaleX(0.9823);">N/A</span>
<span style="left:772.76px;top:531.31px;font-size:10.5px;line-height:10.5px;font-weight:normal;font-style:normal;color:#222;transform:scaleX(0.8747);">1.10</span>
<span style="left:817.63px;top:531.31px;font-size:10.5px;line-height:10.5px;font-weight:normal;font-style:normal;color:#222;transform:scaleX(0.8862);">0.00</span>
<span style="left:838.82px;top:531.31px;font-size:10.5px;line-height:10.5px;font-weight:normal;font-style:normal;color:#2b2bee;transform:scaleX(0.9292);text-decoration:underline;text-underline-offset:1.5px;">Edit</span>
<span style="left:857.62px;top:531.31px;font-size:10.5px;line-height:10.5px;font-weight:normal;font-style:normal;color:#2b2bee;transform:scaleX(0.9317);text-decoration:underline;text-underline-offset:1.5px;">Delete</span>
<span style="left:887.12px;top:531.31px;font-size:10.5px;line-height:10.5px;font-weight:normal;font-style:normal;color:#2b2bee;transform:scaleX(0.9365);text-decoration:underline;text-underline-offset:1.5px;">Insert</span>
<span style="left:34.35px;top:551.31px;font-size:10.5px;line-height:10.5px;font-weight:normal;font-style:normal;color:#2b2bee;transform:scaleX(0.7096);text-decoration:underline;text-underline-offset:1.5px;">4</span>
<div style="left:52.3px;top:551.6px;width:10.4px;height:10.2px;background:#cfcfcf;border:1px solid #c6c6c6;border-radius:2px;box-sizing:border-box;"></div>
<svg style="position:absolute;left:52.3px;top:551.6px" width="10.4" height="10.2"><polyline points="2.3,5.2 4.3,7.3 8.2,2.8" fill="none" stroke="#f6f6f6" stroke-width="1.6"/></svg>
<span style="left:69.02px;top:551.31px;font-size:10.5px;line-height:10.5px;font-weight:normal;font-style:normal;color:#222;transform:scaleX(0.9097);">Subgrade</span>
<span style="left:188.16px;top:551.31px;font-size:10.5px;line-height:10.5px;font-weight:normal;font-style:normal;color:#222;">N/A</span>
<span style="left:209.75px;top:551.31px;font-size:10.5px;line-height:10.5px;font-weight:normal;font-style:normal;color:#2b2bee;transform:scaleX(0.8553);text-decoration:underline;text-underline-offset:1.5px;">2020 Standard SC</span>
<span style="left:634.32px;top:550.43px;font-size:14.5px;line-height:14.5px;font-weight:bold;font-style:normal;color:#1010f0;transform:scaleX(1.1034);">∞</span>
<span style="left:702.21px;top:551.31px;font-size:10.5px;line-height:10.5px;font-weight:normal;font-style:normal;color:#222;transform:scaleX(0.9231);">3.6</span>
<span style="left:747.58px;top:551.31px;font-size:10.5px;line-height:10.5px;font-weight:normal;font-style:normal;color:#222;transform:scaleX(0.9921);">5</span>
<span style="left:773.18px;top:551.31px;font-size:10.5px;line-height:10.5px;font-weight:normal;font-style:normal;color:#222;transform:scaleX(0.9763);">N/A</span>
<span style="left:817.63px;top:551.31px;font-size:10.5px;line-height:10.5px;font-weight:normal;font-style:normal;color:#222;transform:scaleX(0.8862);">0.00</span>
<span style="left:838.82px;top:551.31px;font-size:10.5px;line-height:10.5px;font-weight:normal;font-style:normal;color:#2b2bee;transform:scaleX(0.9292);text-decoration:underline;text-underline-offset:1.5px;">Edit</span>
<span style="left:857.62px;top:551.31px;font-size:10.5px;line-height:10.5px;font-weight:normal;font-style:normal;color:#2b2bee;transform:scaleX(0.9317);text-decoration:underline;text-underline-offset:1.5px;">Delete</span>
<span style="left:887.12px;top:551.31px;font-size:10.5px;line-height:10.5px;font-weight:normal;font-style:normal;color:#2b2bee;transform:scaleX(0.9365);text-decoration:underline;text-underline-offset:1.5px;">Insert</span>
<div style="left:25.3px;top:592.9px;width:62.7px;height:16px;background:#cdcdcd;border:1px solid #bfbfbf;border-radius:2px;box-sizing:border-box;"></div>
<span style="left:31.50px;top:596.11px;font-size:10.5px;line-height:10.5px;font-weight:normal;font-style:normal;color:#9c9c9c;transform:scaleX(1.0466);">Add Layer</span>
<div style="left:107.7px;top:592.9px;width:77.89999999999999px;height:16px;background:#cdcdcd;border:1px solid #bfbfbf;border-radius:2px;box-sizing:border-box;"></div>
<span style="left:114.20px;top:596.11px;font-size:10.5px;line-height:10.5px;font-weight:normal;font-style:normal;color:#9c9c9c;transform:scaleX(1.0499);">Add 2 Layers</span>
<div style="left:188.5px;top:592.9px;width:77.5px;height:16px;background:#cdcdcd;border:1px solid #bfbfbf;border-radius:2px;box-sizing:border-box;"></div>
<span style="left:195.20px;top:596.11px;font-size:10.5px;line-height:10.5px;font-weight:normal;font-style:normal;color:#9c9c9c;transform:scaleX(1.0369);">Add 3 Layers</span>
<div style="left:269.8px;top:592.9px;width:77.19999999999999px;height:16px;background:#cdcdcd;border:1px solid #bfbfbf;border-radius:2px;box-sizing:border-box;"></div>
<span style="left:276.30px;top:596.11px;font-size:10.5px;line-height:10.5px;font-weight:normal;font-style:normal;color:#9c9c9c;transform:scaleX(1.0434);">Add 4 Layers</span>
<div style="left:351.5px;top:592.9px;width:70.69999999999999px;height:16px;background:#cdcdcd;border:1px solid #bfbfbf;border-radius:2px;box-sizing:border-box;"></div>
<span style="left:357.00px;top:596.11px;font-size:10.5px;line-height:10.5px;font-weight:normal;font-style:normal;color:#9c9c9c;transform:scaleX(0.9508);">Add 5 Layers</span>
<span style="left:439.30px;top:595.91px;font-size:10.5px;line-height:10.5px;font-weight:bold;font-style:normal;color:#f52626;transform:scaleX(0.9490);">For SC Subgrade, AB-min is 0.35 or Equiv.</span>
</body></html>
